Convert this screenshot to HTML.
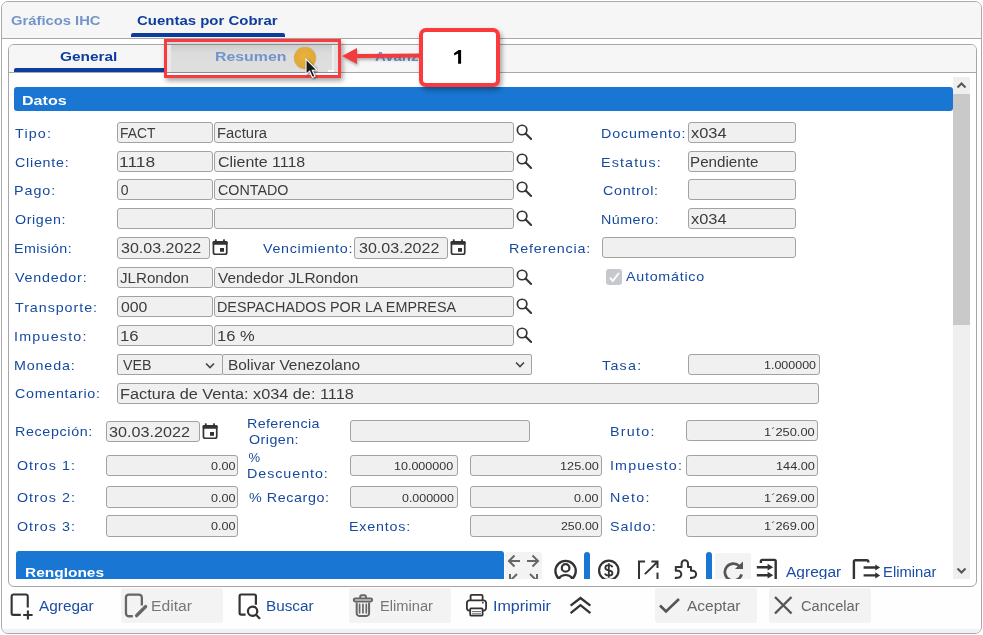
<!DOCTYPE html><html><head><meta charset="utf-8"><style>html,body{margin:0;padding:0;width:983px;height:635px;overflow:hidden;background:#fff;font-family:"Liberation Sans",sans-serif}</style></head><body><div style="position:absolute;left:0;top:0;width:983px;height:635px;overflow:hidden;will-change:transform">
<div style="position:absolute;left:1px;top:1px;width:981px;height:633px;border:1px solid #a9a9a9;border-radius:7px;box-sizing:border-box;background:#fefefe;overflow:hidden"><div style="position:absolute;left:0;top:0;width:979px;height:36px;background:#f6f6f6;border-bottom:1px solid #a8a8a8"></div><div style="position:absolute;left:0;top:627px;width:979px;height:5px;background:#eef2f5"></div></div>
<div style="position:absolute;left:131px;top:33px;width:154px;height:4px;background:#0c3d9e;border-radius:2px 2px 0 0"></div>
<div style="position:absolute;left:8px;top:44px;width:969px;height:543px;border:1px solid #a6a6a6;border-radius:6px;box-sizing:border-box;background:#fff;overflow:hidden"><div style="position:absolute;left:0;top:0;width:967px;height:27px;background:#f6f6f6;border-bottom:1px solid #a8a8a8"></div></div>
<div style="position:absolute;left:14px;top:68px;width:152px;height:4px;background:#0c3d9e;border-radius:2px 2px 0 0"></div>
<div style="position:absolute;left:14px;top:87px;width:939px;height:24px;background:#1976d2;border-radius:3px"></div>
<div style="position:absolute;left:953px;top:77px;width:17px;height:502px;background:#efefef;"></div>
<div style="position:absolute;left:953px;top:94px;width:17px;height:231px;background:#c9c9c9;"></div>
<svg style="position:absolute;left:955px;top:79px;" width="13" height="13" viewBox="0 0 13 13"><path d="M2.5 8.5 L6.5 4.5 L10.5 8.5" fill="none" stroke="#555" stroke-width="2"/></svg>
<svg style="position:absolute;left:955px;top:564px;" width="13" height="13" viewBox="0 0 13 13"><path d="M2.5 4.5 L6.5 8.5 L10.5 4.5" fill="none" stroke="#555" stroke-width="2"/></svg>
<div style="position:absolute;left:117px;top:122px;width:96px;height:21px;background:#f0f0f0;border:1px solid #a2a2a2;border-radius:3px;box-sizing:border-box;"></div>
<div style="position:absolute;left:214px;top:122px;width:300px;height:21px;background:#f0f0f0;border:1px solid #a2a2a2;border-radius:3px;box-sizing:border-box;"></div>
<svg style="position:absolute;left:514px;top:123px;" width="20" height="20" viewBox="0 0 20 20"><circle cx="8.1" cy="7.0" r="4.75" fill="none" stroke="#333" stroke-width="1.7"/><path d="M11.6 10.5 L17.1 16" stroke="#333" stroke-width="2.1" stroke-linecap="round"/></svg>
<div style="position:absolute;left:117px;top:151px;width:96px;height:21px;background:#f0f0f0;border:1px solid #a2a2a2;border-radius:3px;box-sizing:border-box;"></div>
<div style="position:absolute;left:214px;top:151px;width:300px;height:21px;background:#f0f0f0;border:1px solid #a2a2a2;border-radius:3px;box-sizing:border-box;"></div>
<svg style="position:absolute;left:514px;top:152px;" width="20" height="20" viewBox="0 0 20 20"><circle cx="8.1" cy="7.0" r="4.75" fill="none" stroke="#333" stroke-width="1.7"/><path d="M11.6 10.5 L17.1 16" stroke="#333" stroke-width="2.1" stroke-linecap="round"/></svg>
<div style="position:absolute;left:117px;top:179px;width:96px;height:21px;background:#f0f0f0;border:1px solid #a2a2a2;border-radius:3px;box-sizing:border-box;"></div>
<div style="position:absolute;left:214px;top:179px;width:300px;height:21px;background:#f0f0f0;border:1px solid #a2a2a2;border-radius:3px;box-sizing:border-box;"></div>
<svg style="position:absolute;left:514px;top:180px;" width="20" height="20" viewBox="0 0 20 20"><circle cx="8.1" cy="7.0" r="4.75" fill="none" stroke="#333" stroke-width="1.7"/><path d="M11.6 10.5 L17.1 16" stroke="#333" stroke-width="2.1" stroke-linecap="round"/></svg>
<div style="position:absolute;left:117px;top:208px;width:96px;height:21px;background:#f0f0f0;border:1px solid #a2a2a2;border-radius:3px;box-sizing:border-box;"></div>
<div style="position:absolute;left:214px;top:208px;width:300px;height:21px;background:#f0f0f0;border:1px solid #a2a2a2;border-radius:3px;box-sizing:border-box;"></div>
<svg style="position:absolute;left:514px;top:209px;" width="20" height="20" viewBox="0 0 20 20"><circle cx="8.1" cy="7.0" r="4.75" fill="none" stroke="#333" stroke-width="1.7"/><path d="M11.6 10.5 L17.1 16" stroke="#333" stroke-width="2.1" stroke-linecap="round"/></svg>
<div style="position:absolute;left:117px;top:267px;width:96px;height:21px;background:#f0f0f0;border:1px solid #a2a2a2;border-radius:3px;box-sizing:border-box;"></div>
<div style="position:absolute;left:214px;top:267px;width:300px;height:21px;background:#f0f0f0;border:1px solid #a2a2a2;border-radius:3px;box-sizing:border-box;"></div>
<svg style="position:absolute;left:514px;top:268px;" width="20" height="20" viewBox="0 0 20 20"><circle cx="8.1" cy="7.0" r="4.75" fill="none" stroke="#333" stroke-width="1.7"/><path d="M11.6 10.5 L17.1 16" stroke="#333" stroke-width="2.1" stroke-linecap="round"/></svg>
<div style="position:absolute;left:117px;top:296px;width:96px;height:21px;background:#f0f0f0;border:1px solid #a2a2a2;border-radius:3px;box-sizing:border-box;"></div>
<div style="position:absolute;left:214px;top:296px;width:300px;height:21px;background:#f0f0f0;border:1px solid #a2a2a2;border-radius:3px;box-sizing:border-box;"></div>
<svg style="position:absolute;left:514px;top:297px;" width="20" height="20" viewBox="0 0 20 20"><circle cx="8.1" cy="7.0" r="4.75" fill="none" stroke="#333" stroke-width="1.7"/><path d="M11.6 10.5 L17.1 16" stroke="#333" stroke-width="2.1" stroke-linecap="round"/></svg>
<div style="position:absolute;left:117px;top:325px;width:96px;height:21px;background:#f0f0f0;border:1px solid #a2a2a2;border-radius:3px;box-sizing:border-box;"></div>
<div style="position:absolute;left:214px;top:325px;width:300px;height:21px;background:#f0f0f0;border:1px solid #a2a2a2;border-radius:3px;box-sizing:border-box;"></div>
<svg style="position:absolute;left:514px;top:326px;" width="20" height="20" viewBox="0 0 20 20"><circle cx="8.1" cy="7.0" r="4.75" fill="none" stroke="#333" stroke-width="1.7"/><path d="M11.6 10.5 L17.1 16" stroke="#333" stroke-width="2.1" stroke-linecap="round"/></svg>
<div style="position:absolute;left:117px;top:237px;width:93px;height:22px;background:#f0f0f0;border:1px solid #a2a2a2;border-radius:3px;box-sizing:border-box;"></div>
<svg style="position:absolute;left:212px;top:239px;" width="17" height="18" viewBox="0 0 17 18"><rect x="1.45" y="2.85" width="13.3" height="12.4" rx="1.8" fill="none" stroke="#333" stroke-width="1.7"/><rect x="0.6" y="2" width="15" height="3.7" rx="1.2" fill="#333"/><rect x="2.9" y="0.3" width="1.8" height="2.5" rx="0.5" fill="#333"/><rect x="11.1" y="0.3" width="1.8" height="2.5" rx="0.5" fill="#333"/><rect x="8" y="9" width="4" height="3.8" fill="#333"/></svg>
<div style="position:absolute;left:354px;top:237px;width:94px;height:22px;background:#f0f0f0;border:1px solid #a2a2a2;border-radius:3px;box-sizing:border-box;"></div>
<svg style="position:absolute;left:450px;top:239px;" width="17" height="18" viewBox="0 0 17 18"><rect x="1.45" y="2.85" width="13.3" height="12.4" rx="1.8" fill="none" stroke="#333" stroke-width="1.7"/><rect x="0.6" y="2" width="15" height="3.7" rx="1.2" fill="#333"/><rect x="2.9" y="0.3" width="1.8" height="2.5" rx="0.5" fill="#333"/><rect x="11.1" y="0.3" width="1.8" height="2.5" rx="0.5" fill="#333"/><rect x="8" y="9" width="4" height="3.8" fill="#333"/></svg>
<div style="position:absolute;left:602px;top:237px;width:194px;height:21px;background:#f0f0f0;border:1px solid #a2a2a2;border-radius:3px;box-sizing:border-box;"></div>
<div style="position:absolute;left:117px;top:354px;width:106px;height:21px;background:#f0f0f0;border:1px solid #a2a2a2;border-radius:2px;box-sizing:border-box;"></div>
<svg style="position:absolute;left:204px;top:358.5px;" width="12" height="12" viewBox="0 0 12 12"><path d="M2 4.5 L6 8.5 L10 4.5" fill="none" stroke="#444" stroke-width="1.6"/></svg>
<div style="position:absolute;left:222px;top:354px;width:310px;height:21px;background:#f0f0f0;border:1px solid #a2a2a2;border-radius:2px;box-sizing:border-box;"></div>
<svg style="position:absolute;left:514px;top:358px;" width="12" height="12" viewBox="0 0 12 12"><path d="M2 4.5 L6 8.5 L10 4.5" fill="none" stroke="#444" stroke-width="1.6"/></svg>
<div style="position:absolute;left:688px;top:354px;width:132px;height:21px;background:#f0f0f0;border:1px solid #a2a2a2;border-radius:3px;box-sizing:border-box;"></div>
<div style="position:absolute;left:117px;top:383px;width:702px;height:21px;background:#f0f0f0;border:1px solid #a2a2a2;border-radius:3px;box-sizing:border-box;"></div>
<div style="position:absolute;left:688px;top:122px;width:108px;height:21px;background:#f0f0f0;border:1px solid #a2a2a2;border-radius:3px;box-sizing:border-box;"></div>
<div style="position:absolute;left:688px;top:151px;width:108px;height:21px;background:#f0f0f0;border:1px solid #a2a2a2;border-radius:3px;box-sizing:border-box;"></div>
<div style="position:absolute;left:688px;top:179px;width:108px;height:21px;background:#f0f0f0;border:1px solid #a2a2a2;border-radius:3px;box-sizing:border-box;"></div>
<div style="position:absolute;left:688px;top:208px;width:108px;height:21px;background:#f0f0f0;border:1px solid #a2a2a2;border-radius:3px;box-sizing:border-box;"></div>
<div style="position:absolute;left:606px;top:269px;width:16px;height:16px;background:#c6c8ce;border-radius:3px"></div>
<svg style="position:absolute;left:606px;top:269px;" width="16" height="16" viewBox="0 0 16 16"><path d="M3.9 8.6 L6.8 11.9 L13 3.9" fill="none" stroke="#fafafa" stroke-width="2"/></svg>
<div style="position:absolute;left:106px;top:421px;width:94px;height:21px;background:#f0f0f0;border:1px solid #a2a2a2;border-radius:3px;box-sizing:border-box;"></div>
<svg style="position:absolute;left:201.6px;top:422.5px;" width="17" height="18" viewBox="0 0 17 18"><rect x="1.45" y="2.85" width="13.3" height="12.4" rx="1.8" fill="none" stroke="#333" stroke-width="1.7"/><rect x="0.6" y="2" width="15" height="3.7" rx="1.2" fill="#333"/><rect x="2.9" y="0.3" width="1.8" height="2.5" rx="0.5" fill="#333"/><rect x="11.1" y="0.3" width="1.8" height="2.5" rx="0.5" fill="#333"/><rect x="8" y="9" width="4" height="3.8" fill="#333"/></svg>
<div style="position:absolute;left:350px;top:420px;width:180px;height:22px;background:#f0f0f0;border:1px solid #a2a2a2;border-radius:3px;box-sizing:border-box;"></div>
<div style="position:absolute;left:686px;top:420px;width:132px;height:21px;background:#f0f0f0;border:1px solid #a2a2a2;border-radius:3px;box-sizing:border-box;"></div>
<div style="position:absolute;left:106px;top:455px;width:132px;height:21px;background:#f0f0f0;border:1px solid #a2a2a2;border-radius:3px;box-sizing:border-box;"></div>
<div style="position:absolute;left:350px;top:455px;width:108px;height:21px;background:#f0f0f0;border:1px solid #a2a2a2;border-radius:3px;box-sizing:border-box;"></div>
<div style="position:absolute;left:470px;top:455px;width:132px;height:21px;background:#f0f0f0;border:1px solid #a2a2a2;border-radius:3px;box-sizing:border-box;"></div>
<div style="position:absolute;left:686px;top:455px;width:132px;height:21px;background:#f0f0f0;border:1px solid #a2a2a2;border-radius:3px;box-sizing:border-box;"></div>
<div style="position:absolute;left:106px;top:486px;width:132px;height:22px;background:#f0f0f0;border:1px solid #a2a2a2;border-radius:3px;box-sizing:border-box;"></div>
<div style="position:absolute;left:350px;top:486px;width:108px;height:22px;background:#f0f0f0;border:1px solid #a2a2a2;border-radius:3px;box-sizing:border-box;"></div>
<div style="position:absolute;left:470px;top:486px;width:132px;height:22px;background:#f0f0f0;border:1px solid #a2a2a2;border-radius:3px;box-sizing:border-box;"></div>
<div style="position:absolute;left:686px;top:486px;width:132px;height:22px;background:#f0f0f0;border:1px solid #a2a2a2;border-radius:3px;box-sizing:border-box;"></div>
<div style="position:absolute;left:106px;top:515px;width:132px;height:22px;background:#f0f0f0;border:1px solid #a2a2a2;border-radius:3px;box-sizing:border-box;"></div>
<div style="position:absolute;left:470px;top:515px;width:132px;height:22px;background:#f0f0f0;border:1px solid #a2a2a2;border-radius:3px;box-sizing:border-box;"></div>
<div style="position:absolute;left:686px;top:515px;width:132px;height:22px;background:#f0f0f0;border:1px solid #a2a2a2;border-radius:3px;box-sizing:border-box;"></div>
<div style="position:absolute;left:14px;top:545px;width:939px;height:34px;overflow:hidden">
<div style="position:absolute;left:2px;top:6px;width:488px;height:40px;background:#1976d2;border-radius:3px"></div>
<div style="position:absolute;left:491px;top:7px;width:37px;height:40px;background:#f3f3f3;border-radius:3px"></div>
<svg style="position:absolute;left:490.5px;top:7px" width="37" height="30" viewBox="0 0 37 30"><path d="M4 9 H15 M9.5 3.5 L4 9 L9.5 14.5" fill="none" stroke="#666" stroke-width="2"/><path d="M22 9 H33 M27.5 3.5 L33 9 L27.5 14.5" fill="none" stroke="#666" stroke-width="2"/><path d="M5 22 V30 M5 29 L12 22" fill="none" stroke="#666" stroke-width="2"/><path d="M32 22 V30 M32 29 L25 22" fill="none" stroke="#666" stroke-width="2"/></svg>
<svg style="position:absolute;left:537px;top:13px" width="30" height="24" viewBox="0 0 30 24"><circle cx="14.6" cy="13.1" r="10.2" fill="none" stroke="#333" stroke-width="2.3"/><circle cx="14.6" cy="9.9" r="3.8" fill="none" stroke="#333" stroke-width="2.2"/><path d="M7 21 C9.4 18 12 17 14.6 17 C17.2 17 19.8 18 22.2 21" fill="none" stroke="#333" stroke-width="2.2"/></svg>
<div style="position:absolute;left:570px;top:7px;width:6px;height:40px;background:#1976d2;border-radius:3px"></div>
<svg style="position:absolute;left:581px;top:13px" width="30" height="24" viewBox="0 0 30 24"><circle cx="13.8" cy="12.4" r="9.7" fill="none" stroke="#333" stroke-width="2.2"/><path d="M17.4 9.2 C17 7.9 15.8 7.2 13.8 7.2 C11.6 7.2 10.3 8.2 10.3 9.7 C10.3 11.4 11.8 11.9 13.8 12.3 C15.9 12.7 17.5 13.3 17.5 15.1 C17.5 16.8 16 17.7 13.8 17.7 C11.7 17.7 10.4 17 10 15.6 M13.8 5.2 V19.8" fill="none" stroke="#333" stroke-width="1.8"/></svg>
<svg style="position:absolute;left:622px;top:13px" width="26" height="22" viewBox="0 0 26 22"><path d="M9 3.5 H3 V22" fill="none" stroke="#333" stroke-width="2"/><path d="M8.9 16.1 L21.5 3.9 M15.4 3.5 H21.5 V10" fill="none" stroke="#333" stroke-width="2"/><path d="M21.5 14.6 V22" fill="none" stroke="#333" stroke-width="2"/></svg>
<svg style="position:absolute;left:659px;top:13px" width="26" height="22" viewBox="0 0 26 22"><path d="M2.8 22 V19.8 H4.8 A3.5 3.5 0 0 0 4.8 12.8 H2.8 V8.9 H8.6 V5.4 A3.2 3.2 0 0 1 15 5.4 V8.9 H18 V12.8 H19.6 A3.5 3.5 0 0 1 19.6 19.8 H18 V22" fill="none" stroke="#333" stroke-width="2" stroke-linejoin="round"/></svg>
<div style="position:absolute;left:692px;top:7px;width:6px;height:40px;background:#1976d2;border-radius:3px"></div>
<div style="position:absolute;left:701px;top:8px;width:36px;height:40px;background:#f3f3f3;border-radius:3px"></div>
<svg style="position:absolute;left:708px;top:13px" width="26" height="24" viewBox="0 0 26 24"><path d="M17.41 8.09 A8.5 8.5 0 1 0 19.61 16.3" fill="none" stroke="#555" stroke-width="2.7"/><path d="M12.9 10.9 L21 10.9 L21 3.4 Z" fill="#555"/></svg>
<svg style="position:absolute;left:741px;top:13px" width="24" height="24" viewBox="0 0 24 24"><path d="M5.9 5 V3.3 A1.3 1.3 0 0 1 7.2 1.9 H19.4 A1.3 1.3 0 0 1 20.7 3.2 V24" fill="none" stroke="#333" stroke-width="2.4"/><path d="M1.8 9.2 H13.5 M1.8 17.2 H13.5" fill="none" stroke="#333" stroke-width="2.4"/><path d="M12.6 5.8 L18.2 9.2 L12.6 12.6 Z M12.6 13.8 L18.2 17.2 L12.6 20.6 Z" fill="#333"/></svg>
<svg style="position:absolute;left:838px;top:13px" width="30" height="24" viewBox="0 0 30 24"><path d="M1.9 24 V3.8 A1.5 1.5 0 0 1 3.4 2.3 H14.8 A1.5 1.5 0 0 1 16.3 3.8 V4.4" fill="none" stroke="#333" stroke-width="2.4"/><path d="M11.6 9.5 H24 M11.6 17.4 H24" fill="none" stroke="#333" stroke-width="2.4"/><path d="M23.3 6.4 L28.1 9.5 L23.3 12.6 Z M23.3 14.3 L28.1 17.4 L23.3 20.5 Z" fill="#333"/></svg>
</div>
<div style="position:absolute;left:121px;top:588px;width:102px;height:35px;background:#f3f3f3;border-radius:3px"></div>
<div style="position:absolute;left:349px;top:588px;width:102px;height:35px;background:#f3f3f3;border-radius:3px"></div>
<div style="position:absolute;left:655px;top:588px;width:102px;height:35px;background:#f3f3f3;border-radius:3px"></div>
<div style="position:absolute;left:769px;top:588px;width:102px;height:35px;background:#f3f3f3;border-radius:3px"></div>
<svg style="position:absolute;left:9px;top:592px;" width="26" height="30" viewBox="0 0 26 30"><path d="M11.8 22.9 H4.2 A1.6 1.6 0 0 1 2.65 21.3 V4 A1.6 1.6 0 0 1 4.2 2.45 H17.2 A1.6 1.6 0 0 1 18.75 4 V15.5" fill="none" stroke="#333" stroke-width="2.1"/><path d="M18.9 18.5 V27.6 M14.2 23 H23.6" fill="none" stroke="#333" stroke-width="2.1"/></svg>
<svg style="position:absolute;left:122px;top:592px;" width="28" height="28" viewBox="0 0 28 28"><path d="M10.8 24.25 H7 A3 3 0 0 1 3.95 21.2 V5.6 A3 3 0 0 1 7 2.55 H16.8 A3 3 0 0 1 19.85 5.6 V13.4" fill="none" stroke="#666" stroke-width="2.3"/><path d="M14.6 23.6 L21.2 17 M22.2 16 L23.6 14.6" fill="none" stroke="#666" stroke-width="3.4" stroke-linecap="round"/></svg>
<svg style="position:absolute;left:236px;top:592px;" width="28" height="30" viewBox="0 0 28 30"><path d="M9.6 22.7 H5.2 A1.6 1.6 0 0 1 3.6 21.1 V4.1 A1.6 1.6 0 0 1 5.2 2.5 H18.3 A1.6 1.6 0 0 1 19.9 4.1 V12.7" fill="none" stroke="#333" stroke-width="2.2"/><circle cx="16.6" cy="19.25" r="4.7" fill="none" stroke="#333" stroke-width="2.2"/><path d="M20.1 22.8 L23.4 26.2" stroke="#333" stroke-width="2.2" stroke-linecap="round"/></svg>
<svg style="position:absolute;left:351px;top:592px;" width="26" height="28" viewBox="0 0 26 28"><rect x="9.2" y="3.2" width="5.7" height="4" rx="1.5" fill="none" stroke="#666" stroke-width="2"/><rect x="2.8" y="6.6" width="18.3" height="2.8" rx="1.4" fill="#f3f3f3" stroke="#666" stroke-width="2"/><path d="M5.7 10.4 V21.4 A2.5 2.5 0 0 0 8.2 23.9 H15.6 A2.5 2.5 0 0 0 18.1 21.4 V10.4" fill="none" stroke="#666" stroke-width="2"/><path d="M8.6 12.4 V20.8 M11.95 12.4 V20.8 M15.3 12.4 V20.8" stroke="#666" stroke-width="1.7" stroke-linecap="round"/></svg>
<svg style="position:absolute;left:465px;top:592px;" width="24" height="27" viewBox="0 0 24 27"><path d="M5.6 8.3 V3.9 A1 1 0 0 1 6.6 2.9 H16.6 A1 1 0 0 1 17.6 3.9 V8.3" fill="none" stroke="#333" stroke-width="1.8"/><path d="M5.2 18.6 H4.4 A2.5 2.5 0 0 1 1.9 16.1 V10.8 A2.5 2.5 0 0 1 4.4 8.3 H18.6 A2.5 2.5 0 0 1 21.1 10.8 V16.1 A2.5 2.5 0 0 1 18.6 18.6 H17.6" fill="none" stroke="#333" stroke-width="1.8"/><rect x="5.2" y="16.4" width="12.4" height="7.2" rx="0.8" fill="#fff" stroke="#333" stroke-width="1.8"/><path d="M7 19.6 H16 M7 21.8 H16" stroke="#555" stroke-width="0.9"/><circle cx="17.8" cy="10.7" r="0.9" fill="#333"/></svg>
<svg style="position:absolute;left:568px;top:594px;" width="26" height="22" viewBox="0 0 26 22"><path d="M2.6 11.6 L12.5 4 L22.4 11.6 M2.6 19.2 L12.5 11.2 L22.4 19.2" fill="none" stroke="#333" stroke-width="2.3"/></svg>
<svg style="position:absolute;left:657px;top:596px;" width="25" height="20" viewBox="0 0 25 20"><path d="M3 9.5 L9 15.5 L22 3" fill="none" stroke="#555" stroke-width="2.6"/></svg>
<svg style="position:absolute;left:772px;top:594px;" width="22" height="22" viewBox="0 0 22 22"><path d="M3 3 L19.5 19.5 M19.5 3 L3 19.5" fill="none" stroke="#555" stroke-width="2.4"/></svg>
<div style="position:absolute;left:10.50px;top:11.00px;font-size:13px;font-weight:700;color:#7394cb;line-height:20px;white-space:pre;transform:scaleX(1.1372);transform-origin:0 0;">Gráficos IHC</div>
<div style="position:absolute;left:137.30px;top:11.00px;font-size:13px;font-weight:700;color:#0c3d9e;line-height:20px;white-space:pre;transform:scaleX(1.1516);transform-origin:0 0;">Cuentas por Cobrar</div>
<div style="position:absolute;left:60.40px;top:47.00px;font-size:13px;font-weight:700;color:#0c3d9e;line-height:20px;white-space:pre;transform:scaleX(1.1833);transform-origin:0 0;">General</div>
<div style="position:absolute;left:375.40px;top:47.00px;font-size:13px;font-weight:700;color:#7394cb;line-height:20px;white-space:pre;transform:scaleX(1.1475);transform-origin:0 0;">Avanzado</div>
<div style="position:absolute;left:22.26px;top:91.00px;font-size:13px;font-weight:700;color:#ffffff;line-height:20px;white-space:pre;transform:scaleX(1.2371);transform-origin:0 0;">Datos</div>
<div style="position:absolute;left:15.20px;top:124.00px;font-size:13px;font-weight:400;color:#164a9f;letter-spacing:1.068px;line-height:20px;white-space:pre;transform:scaleX(1.1000);transform-origin:0 0;">Tipo:</div>
<div style="position:absolute;left:15.20px;top:153.00px;font-size:13px;font-weight:400;color:#164a9f;letter-spacing:0.675px;line-height:20px;white-space:pre;transform:scaleX(1.1000);transform-origin:0 0;">Cliente:</div>
<div style="position:absolute;left:14.10px;top:181.00px;font-size:13px;font-weight:400;color:#164a9f;letter-spacing:0.886px;line-height:20px;white-space:pre;transform:scaleX(1.1000);transform-origin:0 0;">Pago:</div>
<div style="position:absolute;left:15.20px;top:209.50px;font-size:13px;font-weight:400;color:#164a9f;letter-spacing:0.545px;line-height:20px;white-space:pre;transform:scaleX(1.1000);transform-origin:0 0;">Origen:</div>
<div style="position:absolute;left:14.10px;top:239.00px;font-size:13px;font-weight:400;color:#164a9f;letter-spacing:0.364px;line-height:20px;white-space:pre;transform:scaleX(1.1000);transform-origin:0 0;">Emisión:</div>
<div style="position:absolute;left:15.20px;top:268.00px;font-size:13px;font-weight:400;color:#164a9f;letter-spacing:0.727px;line-height:20px;white-space:pre;transform:scaleX(1.1000);transform-origin:0 0;">Vendedor:</div>
<div style="position:absolute;left:15.20px;top:298.40px;font-size:13px;font-weight:400;color:#164a9f;letter-spacing:0.855px;line-height:20px;white-space:pre;transform:scaleX(1.1000);transform-origin:0 0;">Transporte:</div>
<div style="position:absolute;left:14.10px;top:326.50px;font-size:13px;font-weight:400;color:#164a9f;letter-spacing:1.102px;line-height:20px;white-space:pre;transform:scaleX(1.1000);transform-origin:0 0;">Impuesto:</div>
<div style="position:absolute;left:14.10px;top:355.50px;font-size:13px;font-weight:400;color:#164a9f;letter-spacing:0.773px;line-height:20px;white-space:pre;transform:scaleX(1.1000);transform-origin:0 0;">Moneda:</div>
<div style="position:absolute;left:15.20px;top:384.40px;font-size:13px;font-weight:400;color:#164a9f;letter-spacing:0.636px;line-height:20px;white-space:pre;transform:scaleX(1.1000);transform-origin:0 0;">Comentario:</div>
<div style="position:absolute;left:119.71px;top:123.00px;font-size:14px;font-weight:400;color:#3c3c3c;line-height:20px;white-space:pre;transform:scaleX(0.9886);transform-origin:0 0;">FACT</div>
<div style="position:absolute;left:216.64px;top:123.00px;font-size:14px;font-weight:400;color:#3c3c3c;line-height:20px;white-space:pre;transform:scaleX(1.0553);transform-origin:0 0;">Factura</div>
<div style="position:absolute;left:119.46px;top:152.00px;font-size:14px;font-weight:400;color:#3c3c3c;line-height:20px;white-space:pre;transform:scaleX(1.2429);transform-origin:0 0;">1118</div>
<div style="position:absolute;left:217.70px;top:152.00px;font-size:14px;font-weight:400;color:#3c3c3c;line-height:20px;white-space:pre;transform:scaleX(1.1395);transform-origin:0 0;">Cliente 1118</div>
<div style="position:absolute;left:120.70px;top:180.00px;font-size:14px;font-weight:400;color:#3c3c3c;letter-spacing:0.000px;line-height:20px;white-space:pre;">0</div>
<div style="position:absolute;left:217.70px;top:180.00px;font-size:14px;font-weight:400;color:#3c3c3c;line-height:20px;white-space:pre;transform:scaleX(1.0221);transform-origin:0 0;">CONTADO</div>
<div style="position:absolute;left:120.30px;top:268.00px;font-size:14px;font-weight:400;color:#3c3c3c;line-height:20px;white-space:pre;transform:scaleX(1.0810);transform-origin:0 0;">JLRondon</div>
<div style="position:absolute;left:217.70px;top:268.00px;font-size:14px;font-weight:400;color:#3c3c3c;line-height:20px;white-space:pre;transform:scaleX(1.0992);transform-origin:0 0;">Vendedor JLRondon</div>
<div style="position:absolute;left:120.70px;top:297.00px;font-size:14px;font-weight:400;color:#3c3c3c;line-height:20px;white-space:pre;transform:scaleX(1.1304);transform-origin:0 0;">000</div>
<div style="position:absolute;left:216.67px;top:297.00px;font-size:14px;font-weight:400;color:#3c3c3c;line-height:20px;white-space:pre;transform:scaleX(1.0254);transform-origin:0 0;">DESPACHADOS POR LA EMPRESA</div>
<div style="position:absolute;left:119.51px;top:326.00px;font-size:14px;font-weight:400;color:#3c3c3c;line-height:20px;white-space:pre;transform:scaleX(1.1929);transform-origin:0 0;">16</div>
<div style="position:absolute;left:216.52px;top:326.00px;font-size:14px;font-weight:400;color:#3c3c3c;line-height:20px;white-space:pre;transform:scaleX(1.1806);transform-origin:0 0;">16 %</div>
<div style="position:absolute;left:120.80px;top:238.00px;font-size:14px;font-weight:400;color:#3c3c3c;line-height:20px;white-space:pre;transform:scaleX(1.1457);transform-origin:0 0;">30.03.2022</div>
<div style="position:absolute;left:263.20px;top:238.50px;font-size:13px;font-weight:400;color:#164a9f;letter-spacing:0.620px;line-height:20px;white-space:pre;transform:scaleX(1.1000);transform-origin:0 0;">Vencimiento:</div>
<div style="position:absolute;left:358.60px;top:238.00px;font-size:14px;font-weight:400;color:#3c3c3c;line-height:20px;white-space:pre;transform:scaleX(1.1471);transform-origin:0 0;">30.03.2022</div>
<div style="position:absolute;left:509.20px;top:239.00px;font-size:13px;font-weight:400;color:#164a9f;letter-spacing:0.736px;line-height:20px;white-space:pre;transform:scaleX(1.1000);transform-origin:0 0;">Referencia:</div>
<div style="position:absolute;left:123.20px;top:355.00px;font-size:14px;font-weight:400;color:#3c3c3c;line-height:20px;white-space:pre;transform:scaleX(1.0143);transform-origin:0 0;">VEB</div>
<div style="position:absolute;left:228.30px;top:355.00px;font-size:14px;font-weight:400;color:#3c3c3c;line-height:20px;white-space:pre;transform:scaleX(1.1017);transform-origin:0 0;">Bolivar Venezolano</div>
<div style="position:absolute;left:602.30px;top:355.50px;font-size:13px;font-weight:400;color:#164a9f;letter-spacing:1.136px;line-height:20px;white-space:pre;transform:scaleX(1.1000);transform-origin:0 0;">Tasa:</div>
<div style="position:absolute;left:763.87px;top:355.00px;font-size:11px;font-weight:400;color:#333;line-height:20px;white-space:pre;transform:scaleX(1.1333);transform-origin:0 0;">1.000000</div>
<div style="position:absolute;left:119.54px;top:384.00px;font-size:14px;font-weight:400;color:#3c3c3c;line-height:20px;white-space:pre;transform:scaleX(1.1625);transform-origin:0 0;">Factura de Venta: x034 de: 1118</div>
<div style="position:absolute;left:601.40px;top:124.00px;font-size:13px;font-weight:400;color:#164a9f;letter-spacing:0.747px;line-height:20px;white-space:pre;transform:scaleX(1.1000);transform-origin:0 0;">Documento:</div>
<div style="position:absolute;left:691.20px;top:123.00px;font-size:14px;font-weight:400;color:#3c3c3c;line-height:20px;white-space:pre;transform:scaleX(1.1733);transform-origin:0 0;">x034</div>
<div style="position:absolute;left:601.40px;top:152.50px;font-size:13px;font-weight:400;color:#164a9f;letter-spacing:1.039px;line-height:20px;white-space:pre;transform:scaleX(1.1000);transform-origin:0 0;">Estatus:</div>
<div style="position:absolute;left:690.11px;top:152.00px;font-size:14px;font-weight:400;color:#3c3c3c;line-height:20px;white-space:pre;transform:scaleX(1.0855);transform-origin:0 0;">Pendiente</div>
<div style="position:absolute;left:602.50px;top:181.00px;font-size:13px;font-weight:400;color:#164a9f;letter-spacing:0.649px;line-height:20px;white-space:pre;transform:scaleX(1.1000);transform-origin:0 0;">Control:</div>
<div style="position:absolute;left:601.40px;top:210.00px;font-size:13px;font-weight:400;color:#164a9f;letter-spacing:0.394px;line-height:20px;white-space:pre;transform:scaleX(1.1000);transform-origin:0 0;">Número:</div>
<div style="position:absolute;left:691.20px;top:209.00px;font-size:14px;font-weight:400;color:#3c3c3c;line-height:20px;white-space:pre;transform:scaleX(1.1733);transform-origin:0 0;">x034</div>
<div style="position:absolute;left:626.20px;top:266.50px;font-size:13px;font-weight:400;color:#164a9f;letter-spacing:0.667px;line-height:20px;white-space:pre;transform:scaleX(1.1000);transform-origin:0 0;">Automático</div>
<div style="position:absolute;left:15.40px;top:422.00px;font-size:13px;font-weight:400;color:#164a9f;letter-spacing:0.586px;line-height:20px;white-space:pre;transform:scaleX(1.1000);transform-origin:0 0;">Recepción:</div>
<div style="position:absolute;left:109.40px;top:421.50px;font-size:14px;font-weight:400;color:#3c3c3c;line-height:20px;white-space:pre;transform:scaleX(1.1543);transform-origin:0 0;">30.03.2022</div>
<div style="position:absolute;left:247.40px;top:414.30px;font-size:13px;font-weight:400;color:#164a9f;letter-spacing:0.333px;line-height:20px;white-space:pre;transform:scaleX(1.1000);transform-origin:0 0;">Referencia</div>
<div style="position:absolute;left:248.50px;top:429.70px;font-size:13px;font-weight:400;color:#164a9f;letter-spacing:0.409px;line-height:20px;white-space:pre;transform:scaleX(1.1000);transform-origin:0 0;">Origen:</div>
<div style="position:absolute;left:610.20px;top:422.30px;font-size:13px;font-weight:400;color:#164a9f;letter-spacing:1.145px;line-height:20px;white-space:pre;transform:scaleX(1.1000);transform-origin:0 0;">Bruto:</div>
<div style="position:absolute;left:763.63px;top:422.00px;font-size:11px;font-weight:400;color:#333;line-height:20px;white-space:pre;transform:scaleX(1.1667);transform-origin:0 0;">1´250.00</div>
<div style="position:absolute;left:16.50px;top:456.00px;font-size:13px;font-weight:400;color:#164a9f;letter-spacing:0.909px;line-height:20px;white-space:pre;transform:scaleX(1.1000);transform-origin:0 0;">Otros 1:</div>
<div style="position:absolute;left:210.50px;top:456.00px;font-size:11px;font-weight:400;color:#333;line-height:20px;white-space:pre;transform:scaleX(1.1429);transform-origin:0 0;">0.00</div>
<div style="position:absolute;left:248.50px;top:447.80px;font-size:13px;font-weight:400;color:#164a9f;letter-spacing:0.000px;line-height:20px;white-space:pre;">%</div>
<div style="position:absolute;left:247.40px;top:464.00px;font-size:13px;font-weight:400;color:#164a9f;letter-spacing:0.859px;line-height:20px;white-space:pre;transform:scaleX(1.1000);transform-origin:0 0;">Descuento:</div>
<div style="position:absolute;left:394.46px;top:456.00px;font-size:11px;font-weight:400;color:#333;line-height:20px;white-space:pre;transform:scaleX(1.1373);transform-origin:0 0;">10.000000</div>
<div style="position:absolute;left:559.84px;top:456.00px;font-size:11px;font-weight:400;color:#333;line-height:20px;white-space:pre;transform:scaleX(1.1562);transform-origin:0 0;">125.00</div>
<div style="position:absolute;left:610.20px;top:456.00px;font-size:13px;font-weight:400;color:#164a9f;letter-spacing:1.034px;line-height:20px;white-space:pre;transform:scaleX(1.1000);transform-origin:0 0;">Impuesto:</div>
<div style="position:absolute;left:775.64px;top:456.00px;font-size:11px;font-weight:400;color:#333;line-height:20px;white-space:pre;transform:scaleX(1.1562);transform-origin:0 0;">144.00</div>
<div style="position:absolute;left:16.50px;top:488.00px;font-size:13px;font-weight:400;color:#164a9f;letter-spacing:0.909px;line-height:20px;white-space:pre;transform:scaleX(1.1000);transform-origin:0 0;">Otros 2:</div>
<div style="position:absolute;left:210.50px;top:488.00px;font-size:11px;font-weight:400;color:#333;line-height:20px;white-space:pre;transform:scaleX(1.1429);transform-origin:0 0;">0.00</div>
<div style="position:absolute;left:248.50px;top:488.30px;font-size:13px;font-weight:400;color:#164a9f;letter-spacing:0.525px;line-height:20px;white-space:pre;transform:scaleX(1.1000);transform-origin:0 0;">% Recargo:</div>
<div style="position:absolute;left:401.60px;top:488.00px;font-size:11px;font-weight:400;color:#333;line-height:20px;white-space:pre;transform:scaleX(1.1304);transform-origin:0 0;">0.000000</div>
<div style="position:absolute;left:574.00px;top:488.00px;font-size:11px;font-weight:400;color:#333;line-height:20px;white-space:pre;transform:scaleX(1.1429);transform-origin:0 0;">0.00</div>
<div style="position:absolute;left:610.20px;top:487.50px;font-size:13px;font-weight:400;color:#164a9f;letter-spacing:1.182px;line-height:20px;white-space:pre;transform:scaleX(1.1000);transform-origin:0 0;">Neto:</div>
<div style="position:absolute;left:763.63px;top:488.00px;font-size:11px;font-weight:400;color:#333;line-height:20px;white-space:pre;transform:scaleX(1.1667);transform-origin:0 0;">1´269.00</div>
<div style="position:absolute;left:16.50px;top:517.00px;font-size:13px;font-weight:400;color:#164a9f;letter-spacing:0.909px;line-height:20px;white-space:pre;transform:scaleX(1.1000);transform-origin:0 0;">Otros 3:</div>
<div style="position:absolute;left:210.50px;top:516.00px;font-size:11px;font-weight:400;color:#333;line-height:20px;white-space:pre;transform:scaleX(1.1429);transform-origin:0 0;">0.00</div>
<div style="position:absolute;left:349.20px;top:517.00px;font-size:13px;font-weight:400;color:#164a9f;letter-spacing:0.714px;line-height:20px;white-space:pre;transform:scaleX(1.1000);transform-origin:0 0;">Exentos:</div>
<div style="position:absolute;left:561.00px;top:516.00px;font-size:11px;font-weight:400;color:#333;line-height:20px;white-space:pre;transform:scaleX(1.1212);transform-origin:0 0;">250.00</div>
<div style="position:absolute;left:610.20px;top:516.50px;font-size:13px;font-weight:400;color:#164a9f;letter-spacing:0.945px;line-height:20px;white-space:pre;transform:scaleX(1.1000);transform-origin:0 0;">Saldo:</div>
<div style="position:absolute;left:763.63px;top:516.00px;font-size:11px;font-weight:400;color:#333;line-height:20px;white-space:pre;transform:scaleX(1.1667);transform-origin:0 0;">1´269.00</div>
<div style="position:absolute;left:25.01px;top:563.00px;font-size:13px;font-weight:700;color:#ffffff;line-height:20px;white-space:pre;transform:scaleX(1.1892);transform-origin:0 0;clip-path:inset(0 0 4px 0)">Renglones</div>
<div style="position:absolute;left:785.50px;top:562.00px;font-size:14px;font-weight:400;color:#1b4ea3;line-height:20px;white-space:pre;transform:scaleX(1.1080);transform-origin:0 0;clip-path:inset(0 0 3px 0)">Agregar</div>
<div style="position:absolute;left:882.64px;top:562.00px;font-size:14px;font-weight:400;color:#1b4ea3;line-height:20px;white-space:pre;transform:scaleX(1.0580);transform-origin:0 0;clip-path:inset(0 0 3px 0)">Eliminar</div>
<div style="position:absolute;left:38.60px;top:596.00px;font-size:14px;font-weight:400;color:#1b4ea3;line-height:20px;white-space:pre;transform:scaleX(1.0980);transform-origin:0 0;">Agregar</div>
<div style="position:absolute;left:151.38px;top:596.00px;font-size:14px;font-weight:400;color:#777;line-height:20px;white-space:pre;transform:scaleX(1.1194);transform-origin:0 0;">Editar</div>
<div style="position:absolute;left:265.61px;top:596.00px;font-size:14px;font-weight:400;color:#1b4ea3;line-height:20px;white-space:pre;transform:scaleX(1.0930);transform-origin:0 0;">Buscar</div>
<div style="position:absolute;left:379.65px;top:596.00px;font-size:14px;font-weight:400;color:#777;line-height:20px;white-space:pre;transform:scaleX(1.0480);transform-origin:0 0;">Eliminar</div>
<div style="position:absolute;left:493.15px;top:596.00px;font-size:14px;font-weight:400;color:#1b4ea3;line-height:20px;white-space:pre;transform:scaleX(1.1460);transform-origin:0 0;">Imprimir</div>
<div style="position:absolute;left:686.80px;top:596.00px;font-size:14px;font-weight:400;color:#666;line-height:20px;white-space:pre;transform:scaleX(1.1083);transform-origin:0 0;">Aceptar</div>
<div style="position:absolute;left:800.50px;top:596.00px;font-size:14px;font-weight:400;color:#666;line-height:20px;white-space:pre;transform:scaleX(1.0446);transform-origin:0 0;">Cancelar</div>
<div style="position:absolute;left:164px;top:39px;width:177px;height:39px;box-sizing:border-box;border:3px solid #fb3a3e;box-shadow:2px 3px 5px rgba(0,0,0,0.35);background:#fff;overflow:hidden"><div style="position:absolute;left:0;top:0;width:171px;height:2px;background:#dadada"></div><div style="position:absolute;left:0;top:2px;width:171px;height:1px;background:#8c8c8c"></div><div style="position:absolute;left:0;top:3px;width:171px;height:27px;background:linear-gradient(#cdcdcd,#dcdcdc 30%,#dfdfdf)"></div><div style="position:absolute;left:0;top:3px;width:4px;height:27px;background:#e9e9e9"></div><div style="position:absolute;left:165px;top:3px;width:2px;height:27px;background:#efefef"></div><div style="position:absolute;left:167px;top:3px;width:4px;height:27px;background:#e2e2e2"></div><div style="position:absolute;left:161px;top:28px;width:6px;height:2px;background:#fafafa"></div><div style="position:absolute;left:0;top:30px;width:171px;height:1px;background:#8c8c8c"></div></div>
<div style="position:absolute;left:214.68px;top:47.00px;font-size:13px;font-weight:700;color:#7394cb;line-height:20px;white-space:pre;transform:scaleX(1.2211);transform-origin:0 0;">Resumen</div>
<div style="position:absolute;left:294px;top:47px;width:22px;height:22px;border-radius:50%;background:radial-gradient(circle at 45% 40%,#e9b23c,#d9a236);box-shadow:0 0 1px rgba(0,0,0,0.3)"></div>
<svg style="position:absolute;left:302px;top:57px;" width="16" height="24" viewBox="0 0 16 24"><path d="M4 2 L4 17.5 L7.6 14.2 L10.4 20.5 L13 19.3 L10.3 13.2 L15 13 Z" fill="#1a1a1a" stroke="#fff" stroke-width="1.1" style="filter:drop-shadow(1px 1px 1px rgba(0,0,0,.5))"/></svg>
<svg style="position:absolute;left:338px;top:44px;filter:drop-shadow(1px 2px 1.5px rgba(0,0,0,.3))" width="86" height="24" viewBox="0 0 86 24"><path d="M18 12 L84 11.5" stroke="#f23b3f" stroke-width="4.2"/><path d="M4 12 L19 4 L19 20 Z" fill="#f23b3f"/></svg>
<div style="position:absolute;left:419px;top:28px;width:81px;height:59px;box-sizing:border-box;border:4px solid #fb3a3e;border-radius:7px;background:#fff;box-shadow:2px 3px 5px rgba(0,0,0,0.35)"></div>
<svg style="position:absolute;left:450px;top:45px;" width="16" height="22" viewBox="0 0 16 22"><path d="M4 8.2 L8.6 4.9 L11.1 4.9 L11.1 18.8 L8.1 18.8 L8.1 8.6 L4.3 10.6 Z" fill="#000"/></svg>
</div></body></html>
